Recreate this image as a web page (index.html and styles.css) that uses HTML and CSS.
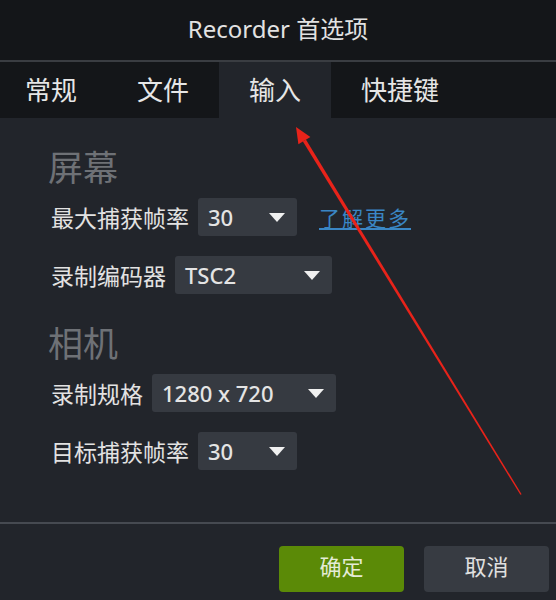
FILE: index.html
```html
<!DOCTYPE html>
<html>
  <head>
    <title>Recorder 首选项</title>
    <link rel="stylesheet" href="styles.css">
  </head>
  <body>
    <div class="title">Recorder 首选项</div>

    <div class="tabs">
      <div class="tab">常规</div>
      <div class="tab">文件</div>
      <div class="tab active">输入</div>
      <div class="tab">快捷键</div>
    </div>

    <div class="content">
      <h2>屏幕</h2>
      <div class="row">
        <span class="label">最大捕获帧率</span>
        <div class="select w-small">30</div>
        <a class="link" href="#">了解更多</a>
      </div>
      <div class="row">
        <span class="label">录制编码器</span>
        <div class="select w-codec">TSC2</div>
      </div>

      <h2>相机</h2>
      <div class="row">
        <span class="label">录制规格</span>
        <div class="select w-size">1280 x 720</div>
      </div>
      <div class="row">
        <span class="label">目标捕获帧率</span>
        <div class="select w-small">30</div>
      </div>
    </div>

    <div class="footer">
      <button class="btn ok">确定</button>
      <button class="btn cancel">取消</button>
    </div>

    <!-- annotation arrow drawn over the dialog -->
    <svg class="arrow" width="556" height="600" viewBox="0 0 556 600">
      <polygon points="296,127 310.4,136.9 298.4,144.3" fill="#e8231a" />
      <polygon points="305.9,139.6 521.6,494.2 520.4,494.8 302.9,141.6" fill="#e8231a" />
    </svg>
  </body>
</html>
```

FILE: styles.css
```css
body {
  margin: 0;
  width: 556px;
  height: 600px;
  background-color: #22252b;
  font-family: "Noto Sans", "Noto Sans CJK SC", sans-serif;
  color: #dcdcdc;
  display: flex;
  flex-direction: column;
  position: relative;
  overflow: hidden;
}
.title {
  height: 60px;
  line-height: 58px;
  text-align: center;
  font-size: 24px;
  color: #e2e2e2;
  background-color: #141619;
  border-bottom: 2px solid #3a3d42;
}
.tabs {
  display: flex;
  height: 56px;
  background-color: #141619;
}
.tab {
  padding: 0 30px;
  line-height: 56px;
  font-size: 26px;
  color: #e6e6e6;
}
.tab:first-child {
  padding-left: 25px;
}
.tab.active {
  background-color: #22252b;
}
.content {
  flex: 1;
  padding-left: 51px;
}
h2 {
  margin: 28px 0 8px -3px;
  font-size: 35px;
  line-height: 44px;
  font-weight: normal;
  color: #6e7176;
}
.row {
  display: flex;
  align-items: center;
  height: 38px;
  margin-bottom: 20px;
}
.label {
  font-size: 23px;
  margin-right: 9px;
  color: #e2e2e2;
}
.select {
  position: relative;
  height: 38px;
  line-height: 38px;
  padding-left: 10px;
  box-sizing: border-box;
  background-color: #363a41;
  border-radius: 3px;
  font-size: 22px;
  font-weight: 500;
  color: #e4e4e4;
}
.select::after {
  content: "";
  position: absolute;
  right: 12px;
  top: 15px;
  border-left: 8px solid transparent;
  border-right: 8px solid transparent;
  border-top: 9px solid #f0f0f0;
}
.w-small {
  width: 99px;
}
.w-codec {
  width: 157px;
}
.w-size {
  width: 184px;
}
.link {
  margin-left: 22px;
  font-size: 21px;
  color: #3a86c4;
  letter-spacing: 2px;
}
.footer {
  height: 78px;
  border-top: 2px solid #464a51;
  display: flex;
  justify-content: flex-end;
  gap: 20px;
  padding: 22px 7px 0 0;
  box-sizing: border-box;
}
.btn {
  width: 125px;
  height: 46px;
  padding: 0 0 8px;
  border: none;
  border-radius: 4px;
  font-family: inherit;
  font-size: 22px;
}
.ok {
  background-color: #5b8a07;
  color: #e4ecd6;
}
.cancel {
  background-color: #373b42;
  color: #e0e0e0;
}
.arrow {
  position: absolute;
  left: 0;
  top: 0;
  pointer-events: none;
}
```
